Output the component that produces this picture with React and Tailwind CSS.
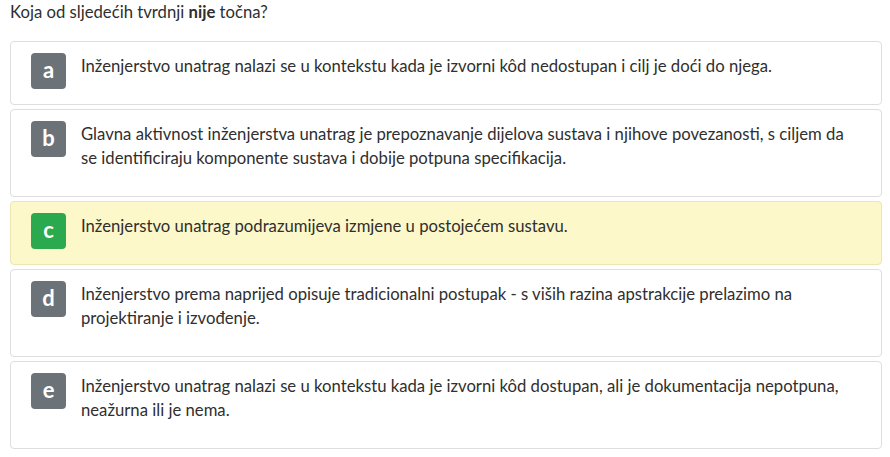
import React from "react";

const items = [
  { l: "a", t: ["Inženjerstvo unatrag nalazi se u kontekstu kada je izvorni kôd nedostupan i cilj je doći do njega."] },
  { l: "b", t: ["Glavna aktivnost inženjerstva unatrag je prepoznavanje dijelova sustava i njihove povezanosti, s ciljem da", "se identificiraju komponente sustava i dobije potpuna specifikacija."] },
  { l: "c", t: ["Inženjerstvo unatrag podrazumijeva izmjene u postojećem sustavu."], ok: true },
  { l: "d", t: ["Inženjerstvo prema naprijed opisuje tradicionalni postupak - s viših razina apstrakcije prelazimo na", "projektiranje i izvođenje."] },
  { l: "e", t: ["Inženjerstvo unatrag nalazi se u kontekstu kada je izvorni kôd dostupan, ali je dokumentacija nepotpuna,", "neažurna ili je nema."] },
];

export default function App() {
  return (
    <div className="w-[890px] h-[457px] bg-white pl-[10px] pr-[8px] text-[#2f2f2f] overflow-hidden" style={{ fontFamily: "Lato, 'Open Sans', sans-serif" }}>
      <div className="text-[16.7px] leading-[24px]">
        Koja od sljedećih tvrdnji <b>nije</b> točna?
      </div>
      <div className="mt-[17px] flex flex-col gap-[4px]">
        {items.map((it) => (
          <div
            key={it.l}
            className={
              "flex items-start gap-[15px] rounded-[4px] border pl-5 pr-3 pt-[11px] pb-3 " +
              (it.ok ? "bg-[#fdf8c9] border-[#ece5b4]" : "bg-white border-[#dedede]")
            }
          >
            <div
              className={
                "w-[35px] h-[36px] shrink-0 rounded-[4px] flex items-center justify-center text-white font-bold text-[22px] leading-none pb-[2px] " +
                (it.ok ? "bg-[#2aa94f]" : "bg-[#6c7378]")
              }
            >
              {it.l}
            </div>
            <div className="text-[16.7px] leading-[24px] pt-[1px] pb-[14px]">
              {it.t.map((line, i) => (
                <div key={i} className="whitespace-nowrap">{line}</div>
              ))}
            </div>
          </div>
        ))}
      </div>
    </div>
  );
}
